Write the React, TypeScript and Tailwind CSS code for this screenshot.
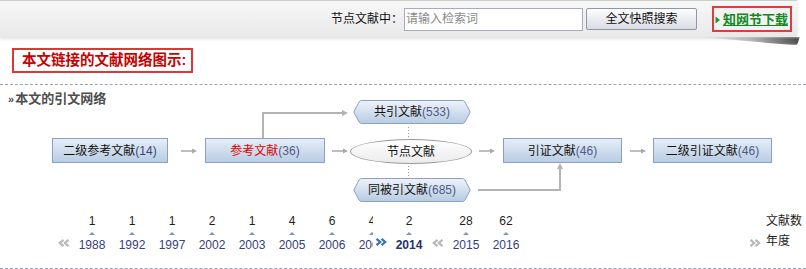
import React from "react";

type YearItem = { year: string; count: number };

const firstYears: YearItem[] = [
  { year: "1988", count: 1 },
  { year: "1992", count: 1 },
  { year: "1997", count: 1 },
  { year: "2002", count: 2 },
  { year: "2003", count: 1 },
  { year: "2005", count: 4 },
  { year: "2006", count: 6 },
  { year: "2008", count: 4 },
];

const lastYears: YearItem[] = [
  { year: "2015", count: 28 },
  { year: "2016", count: 62 },
];

// double chevrons used by the year scroller
const Chevrons = ({ dir, color }: { dir: "left" | "right"; color: string }) => (
  <svg width="12" height="8" viewBox="0 0 12 8" className="block">
    {dir === "left" ? (
      <path d="M5.5 0.8L1.8 4L5.5 7.2M10.5 0.8L6.8 4L10.5 7.2" stroke={color} strokeWidth="2.2" fill="none" />
    ) : (
      <path d="M1.5 0.8L5.2 4L1.5 7.2M6.5 0.8L10.2 4L6.5 7.2" stroke={color} strokeWidth="2.2" fill="none" />
    )}
  </svg>
);

const YearCol = ({ item, active }: { item: YearItem; active?: boolean }) => (
  <div className="w-[40px] shrink-0 flex flex-col items-center">
    <div className="text-[12px] leading-[14px] text-[#1e1e1e]">{item.count}</div>
    <div className="mt-[3px] h-[4px] flex items-end">
      <div className="w-0 h-0 border-x-[3px] border-x-transparent border-b-[3px] border-b-[#7f93bb]" />
    </div>
    <div
      className={
        active
          ? "mt-[3px] text-[12px] leading-[14px] font-bold text-[#26346a]"
          : "mt-[3px] text-[12px] leading-[14px] text-[#353f78]"
      }
    >
      {item.year}
    </div>
  </div>
);

// hexagon node (共引 / 同被引)
const HexNode = ({ top, label, count }: { top: string; label: string; count: string }) => (
  <div className={`absolute left-[353px] w-[118px] h-[24px] ${top}`}>
    <svg width="118" height="24" viewBox="0 0 118 24" className="absolute inset-0">
      <defs>
        <linearGradient id={`hex-${label}`} x1="0" y1="0" x2="0" y2="1">
          <stop offset="0" stopColor="#eef3fa" />
          <stop offset="1" stopColor="#b6cbe2" />
        </linearGradient>
      </defs>
      <path
        d="M9 0.5H109Q111 0.5 112 2L117.2 12L112 22Q111 23.5 109 23.5H9Q7 23.5 6 22L0.8 12L6 2Q7 0.5 9 0.5Z"
        fill={`url(#hex-${label})`}
        stroke="#8aa2c4"
      />
    </svg>
    <div className="relative h-full flex items-center justify-center text-[12px] leading-[14px] text-[#111]">
      {label}
      <span className="text-[#4f5a86]">{count}</span>
    </div>
  </div>
);

const App = () => {
  return (
    <div className="w-[806px] h-[269px] bg-white overflow-hidden font-['Liberation_Sans','Noto_Sans_CJK_SC',sans-serif] text-[#111]">
      {/* search bar */}
      <div className="relative w-[797px] h-[37px] border-t border-[#cdcdcd] bg-gradient-to-b from-[#f7f7f7] to-[#e9e9e9] shadow-[0_2px_3px_rgba(0,0,0,0.12)] flex items-center justify-end pr-[5px]">
        <span className="shrink-0 whitespace-nowrap text-[12px] leading-[14px] text-[#111]">节点文献中：</span>
        <input
          className="ml-[1px] w-[179px] h-[23px] border border-[#a6adb8] bg-white px-[1px] text-[12px] leading-[14px] outline-none placeholder:text-[#8a8a8a]"
          placeholder="请输入检索词"
        />
        <button className="ml-[3px] w-[111px] h-[22px] border border-[#8d97a8] rounded-[2px] bg-gradient-to-b from-[#fdfdfd] to-[#dadde5] text-[12px] leading-[14px] text-[#111]">
          全文快照搜索
        </button>
        <div className="ml-[15px] w-[80px] h-[26px] border-2 border-[#e33b3b] bg-[#f2f2f2] flex items-center pl-[1px]">
          <svg width="6" height="8" viewBox="0 0 6 8" className="mr-[2px] mt-[1px]">
            <path d="M0.5 0.5L5 4L0.5 7.5Z" fill="#1a9a2a" />
          </svg>
          <span className="text-[13px] leading-[15px] font-bold text-[#128a22] underline">知网节下载</span>
        </div>
        <div className="absolute right-[-3px] top-full w-[100px] h-[8px] bg-gradient-to-r from-transparent via-[rgba(0,0,0,0.25)] to-[rgba(0,0,0,0.7)] [clip-path:polygon(0_0,100%_0,97%_100%,92%_100%)] blur-[1px]" />
      </div>

      {/* title */}
      <div className="ml-[12px] mt-[11px] w-[181px] h-[25px] border-2 border-[#e03636] flex items-center pl-[8px]">
        <span className="text-[14.5px] leading-[17px] font-bold text-[#c80000] whitespace-nowrap">本文链接的文献网络图示:</span>
      </div>

      <div className="mt-[11px] border-t border-dashed border-[#97a2b6]" />

      {/* citation network */}
      <div className="relative h-[120px]">
        <div className="pt-[7px] pl-[8px] flex items-center text-[13px] leading-[14px] font-bold text-[#4d4d4d]">
          <span className="text-[11px] mr-[1px]">»</span>本文的引文网络
        </div>

        <svg width="806" height="120" viewBox="0 0 806 120" className="absolute inset-0">
          <g stroke="#a9a9a9" strokeWidth="1.5" fill="none">
            <path d="M181 66H195" />
            <path d="M332 66H346" />
            <path d="M479 66H493" />
            <path d="M630 66H644" />
          </g>
          <g fill="#a9a9a9">
            <path d="M197 66L192 63.5V68.5Z" />
            <path d="M348 66L343 63.5V68.5Z" />
            <path d="M495 66L490 63.5V68.5Z" />
            <path d="M646 66L641 63.5V68.5Z" />
          </g>
          <g stroke="#b3b3b3" strokeWidth="2" fill="none">
            <path d="M263 53V28H343" />
            <path d="M478 105H560V82" />
          </g>
          <g fill="#b3b3b3">
            <path d="M348 28L342 25V31Z" />
            <path d="M560 78L557 84H563Z" />
          </g>
          <g stroke="#9c9c9c" strokeWidth="1" strokeDasharray="1 2" fill="none">
            <path d="M408.5 42V53" />
            <path d="M408.5 81V92" />
          </g>
        </svg>

        <HexNode top="top-[15px]" label="共引文献" count="(533)" />
        <HexNode top="top-[93px]" label="同被引文献" count="(685)" />

        <div className="absolute left-[52px] top-[53px] w-[116px] h-[25px] border border-[#88a2c6] bg-gradient-to-b from-[#e6eef7] to-[#b8cce3] flex items-center justify-center text-[12px] leading-[14px]">
          二级参考文献<span className="text-[#3b4679]">(14)</span>
        </div>
        <div className="absolute left-[205px] top-[53px] w-[120px] h-[25px] border border-[#88a2c6] bg-gradient-to-b from-[#e6eef7] to-[#b8cce3] flex items-center justify-center text-[12px] leading-[14px]">
          <span className="text-[#e00000]">参考文献</span>
          <span className="text-[#4f5a86]">(36)</span>
        </div>
        <div className="absolute left-[350px] top-[54px] w-[122px] h-[25px] rounded-[50%] border border-[#9a9a9a] bg-gradient-to-b from-[#ffffff] to-[#ebebeb] flex items-center justify-center text-[12px] leading-[14px]">
          节点文献
        </div>
        <div className="absolute left-[503px] top-[53px] w-[119px] h-[25px] border border-[#88a2c6] bg-gradient-to-b from-[#e6eef7] to-[#b8cce3] flex items-center justify-center text-[12px] leading-[14px]">
          引证文献<span className="text-[#4f5a86]">(46)</span>
        </div>
        <div className="absolute left-[653px] top-[53px] w-[119px] h-[25px] border border-[#88a2c6] bg-gradient-to-b from-[#e6eef7] to-[#b8cce3] flex items-center justify-center text-[12px] leading-[14px]">
          二级引证文献<span className="text-[#4f5a86]">(46)</span>
        </div>
      </div>

      {/* year distribution */}
      <div className="h-[63px] flex items-start pt-[9px]">
        <div className="ml-[58px] mt-[25px]">
          <Chevrons dir="left" color="#b8b8b8" />
        </div>
        <div className="ml-[2px] w-[301px] overflow-hidden flex shrink-0">
          {firstYears.map((item) => (
            <YearCol key={item.year} item={item} />
          ))}
        </div>
        <div className="ml-[2px] mt-[24px]">
          <Chevrons dir="right" color="#3a72b8" />
        </div>
        <div className="ml-[2px]">
          <YearCol item={{ year: "2014", count: 2 }} active />
        </div>
        <div className="ml-[3px] mt-[25px]">
          <Chevrons dir="left" color="#b8b8b8" />
        </div>
        <div className="ml-[2px] w-[301px] overflow-hidden flex shrink-0">
          {lastYears.map((item) => (
            <YearCol key={item.year} item={item} />
          ))}
        </div>
        <div className="ml-[2px] mt-[25px]">
          <Chevrons dir="right" color="#b8b8b8" />
        </div>
        <div className="ml-[5px] flex flex-col text-[12px] leading-[14px] text-[#1e1e1e]">
          <span>文献数</span>
          <span className="mt-[6px]">年度</span>
        </div>
      </div>

      <div className="border-t border-dashed border-[#97a2b6]" />
    </div>
  );
};

export default App;
